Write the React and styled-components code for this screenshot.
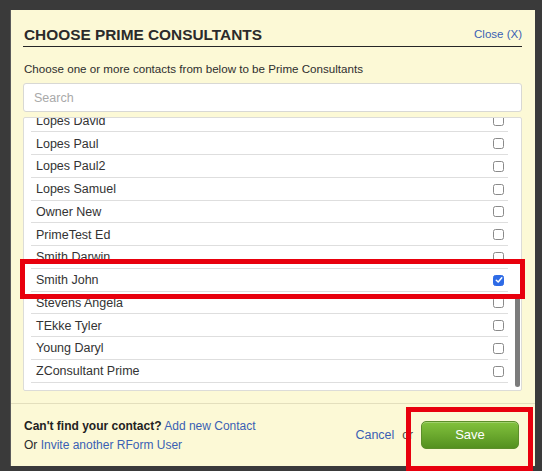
import React, { useLayoutEffect, useRef, useState } from "react";
import styled, { createGlobalStyle } from "styled-components";

const GlobalStyle = createGlobalStyle`
  html, body {
    margin: 0;
    padding: 0;
    background: #fff;
  }
  body {
    font-family: "Liberation Sans", Arial, sans-serif;
  }
  * {
    box-sizing: border-box;
  }
`;

const Frame = styled.div`
  position: relative;
  width: 542px;
  height: 471px;
  background: #3a3a3a;
  padding: 10px 7px 5px 10px;
`;

const Modal = styled.div`
  width: 525px;
  height: 456px;
  background: #fcf9d6;
  border-left: 1px solid #5a5a5a;
  display: flex;
  flex-direction: column;
`;

const Body = styled.div`
  padding: 0 13px 0 12px;
  flex: 1;
`;

const Header = styled.div`
  display: flex;
  justify-content: space-between;
  align-items: flex-start;
  padding-top: 16px;
  padding-bottom: 2px;
  border-bottom: 1px solid #262626;
`;

const Title = styled.h2`
  margin: 0 0 0 1px;
  font-size: 15.4px;
  line-height: 18px;
  font-weight: bold;
  color: #2b2b2b;
`;

const LinkText = styled.a`
  color: #3a5fb4;
  font-size: ${({ size }) => size || "12px"};
  line-height: ${({ lh }) => lh || "18px"};
  text-decoration: none;
  cursor: pointer;
`;

const Intro = styled.p`
  margin: 15px 0 0 1px;
  font-size: 11.6px;
  line-height: 14px;
  color: #2e2e2e;
`;

const Search = styled.input`
  display: block;
  width: 100%;
  height: 29px;
  margin-top: 7px;
  border: 1px solid #d8d8d4;
  border-radius: 3px;
  background: #fff;
  padding: 0 10px;
  font-family: "Liberation Sans", Arial, sans-serif;
  font-size: 12.5px;
  color: #333;
  outline: none;

  &::placeholder {
    color: #a9a9a9;
  }
`;

const ListWrap = styled.div`
  position: relative;
  margin-top: 5px;
`;

const List = styled.div`
  height: 274px;
  overflow: hidden;
  background: #fff;
  border: 1px solid #dcdcd8;
  border-radius: 2px;
  padding: 0 13px 7px 7px;
`;

const Thumb = styled.div`
  position: absolute;
  right: 2px;
  width: 5px;
  border-radius: 3px;
  background: #7b7b7b;
`;

const Row = styled.div`
  display: flex;
  justify-content: space-between;
  align-items: center;
  height: 22.75px;
  padding: 1px 4px 0 5px;
  border-bottom: 1px solid #dedede;
  font-size: 12.5px;
  color: #333;
`;

const Box = styled.span`
  width: 11px;
  height: 11px;
  border-radius: 2.5px;
  border: 1px solid ${({ checked }) => (checked ? "#2e6be6" : "#8a8a8a")};
  background: ${({ checked }) => (checked ? "#2e6be6" : "#fff")};
  display: flex;
  align-items: center;
  justify-content: center;
`;

const Footer = styled.div`
  border-top: 1px solid #e3dfbd;
  padding: 12px 16px 11px 13px;
  display: flex;
  justify-content: space-between;
  align-items: center;
`;

const Help = styled.div`
  font-size: 12px;
  line-height: 19px;
  color: #2b2b2b;
  padding-top: 1px;

  strong {
    color: #222;
  }
`;

const Actions = styled.div`
  display: flex;
  align-items: center;
  gap: 8px;
  font-size: 12px;
  color: #444;
  margin-top: -2px;
`;

const SaveButton = styled.button`
  width: 98px;
  height: 28px;
  border-radius: 5px;
  border: 1px solid #5b8e2a;
  background: linear-gradient(#82c23d, #54901f);
  color: #fff;
  font-family: "Liberation Sans", Arial, sans-serif;
  font-size: 13px;
  cursor: pointer;
  box-shadow: inset 0 1px 0 rgba(255, 255, 255, 0.25);
`;

const Mark = styled.div`
  position: absolute;
  left: ${({ x }) => x}px;
  top: ${({ y }) => y}px;
  width: ${({ w }) => w}px;
  height: ${({ h }) => h}px;
  border: 5px solid #e8000d;
  pointer-events: none;
`;

const contacts = [
  "Adams Brian",
  "Allen Mark",
  "Baker Susan",
  "Brown Kevin",
  "Carter Lisa",
  "Clark Steven",
  "Davis Robert",
  "Evans Karen",
  "Fisher Tom",
  "Garcia Maria",
  "Green Paul",
  "Hall Jennifer",
  "Harris Mike",
  "Hill Andrew",
  "Jackson Amy",
  "Johnson Eric",
  "Jones Laura",
  "King Daniel",
  "Lee Michelle",
  "Lewis Chris",
  "Lopes Anna",
  "Lopes Carlos",
  "Lopes David",
  "Lopes Paul",
  "Lopes Paul2",
  "Lopes Samuel",
  "Owner New",
  "PrimeTest Ed",
  "Smith Darwin",
  "Smith John",
  "Stevens Angela",
  "TEkke Tyler",
  "Young Daryl",
  "ZConsultant Prime",
];

const Check = () => (
  <svg width="8" height="8" viewBox="0 0 8 8">
    <path d="M1.3 4.2 L3.2 6 L6.8 1.8" fill="none" stroke="#fff" strokeWidth="1.5" strokeLinecap="round" strokeLinejoin="round" />
  </svg>
);

const App = () => {
  const listRef = useRef(null);
  const [thumb, setThumb] = useState({ top: 0, height: 0 });

  useLayoutEffect(() => {
    // the list is shown scrolled to its end, with a thin overlay scroll thumb
    const el = listRef.current;
    if (!el) return;
    el.scrollTop = el.scrollHeight;
    const track = el.clientHeight - 4;
    const height = (el.clientHeight / el.scrollHeight) * track;
    const top = 2 + (el.scrollTop / el.scrollHeight) * track;
    setThumb({ top, height });
  }, []);

  return (
    <>
      <GlobalStyle />
      <Frame>
        <Modal>
          <Body>
            <Header>
              <Title>CHOOSE PRIME CONSULTANTS</Title>
              <LinkText size="11.5px" lh="14px" style={{ marginTop: 1 }}>
                Close (X)
              </LinkText>
            </Header>
            <Intro>Choose one or more contacts from below to be Prime Consultants</Intro>
            <Search placeholder="Search" />
            <ListWrap>
              <List ref={listRef}>
                {contacts.map((name) => (
                  <Row key={name}>
                    <span>{name}</span>
                    <Box checked={name === "Smith John"}>{name === "Smith John" && <Check />}</Box>
                  </Row>
                ))}
              </List>
              <Thumb style={{ top: thumb.top, height: thumb.height }} />
            </ListWrap>
          </Body>
          <Footer>
            <Help>
              <div>
                <strong>Can't find your contact?</strong> <LinkText>Add new Contact</LinkText>
              </div>
              <div>
                Or <LinkText>Invite another RForm User</LinkText>
              </div>
            </Help>
            <Actions>
              <LinkText size="12.5px">Cancel</LinkText>
              <span>or</span>
              <SaveButton>Save</SaveButton>
            </Actions>
          </Footer>
        </Modal>
        <Mark x={20} y={259} w={505} h={40} />
        <Mark x={406} y={407} w={127} h={64} />
      </Frame>
    </>
  );
};

export default App;
